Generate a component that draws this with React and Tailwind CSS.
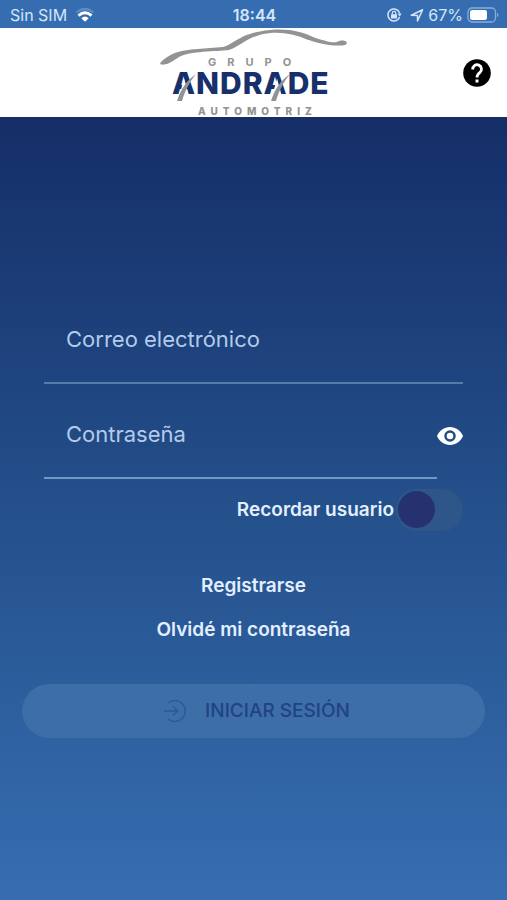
import { useState } from "react";

function StatusBar() {
  return (
    <div className="flex h-7 items-center justify-between bg-[#366db0] px-2 pt-0.5 text-[#d3e5fa]">
      <div className="flex flex-1 items-center gap-2 pl-0.5 text-base leading-5">
        <span>Sin SIM</span>
        <svg className="h-4 w-5" viewBox="0 0 20 16" fill="none" aria-hidden="true">
          <path d="M1.5 5.5Q10 -1.5 18.5 5.5" stroke="#5a8dc8" strokeWidth="2.2" />
          <path d="M3.500 8.6Q10 2.800 16.500 8.6" stroke="#fff" strokeWidth="2.8" />
          <path d="M6.3 11.2Q10 7.800 13.7 11.2L10 14.8Z" fill="#fff" />
        </svg>
      </div>
      <span className="text-base leading-5 font-semibold">18:44</span>
      <div className="flex flex-1 items-center justify-end gap-1 text-base leading-5">
        <svg className="mr-1 h-4 w-4" viewBox="0 0 16 16" fill="none" stroke="currentColor" aria-hidden="true">
          <path d="M13.6 6A6 6 0 1 0 13.6 10" strokeWidth="1.5" />
          <path d="M11.5 6.5h4.2l-2 3z" fill="currentColor" stroke="none" />
          <rect x="5" y="7.2" width="6" height="4.3" rx=".6" fill="currentColor" stroke="none" />
          <path d="M6.3 7.5V6a1.7 1.7 0 0 1 3.4 0v1.5" strokeWidth="1.2" />
        </svg>
        <svg className="h-4 w-3.5" viewBox="0 0 14 16" fill="none" stroke="currentColor" strokeWidth="1.5" strokeLinejoin="round" aria-hidden="true">
          <path d="M1.3 8.2 12.6 2.8 7.5 14V8.4Z" />
        </svg>
        <span>67%</span>
        <svg className="h-4 w-8" viewBox="0 0 32 16" fill="none" aria-hidden="true">
          <rect x="1" y="1" width="27.5" height="14" rx="4" stroke="#86aeda" strokeWidth="1.3" />
          <rect x="3" y="3" width="17" height="10" rx="2.2" fill="#fff" />
          <path d="M30 5.5q2.6 2.5 0 5z" fill="#86aeda" />
        </svg>
      </div>
    </div>
  );
}

function Logo() {
  return (
    <svg className="h-[89px] w-[190px]" viewBox="158 28 190 89" role="img" aria-label="Grupo Andrade Automotriz">
      <path
        d="M160 62C168 54 177 51 190 49.500L222 47C233 44 238 35 259 31.500C282 27 300 31 312 37C323 41 331 43 336 42C339 40 344 40 345.500 42C347 45 342 46 336 45.500C326 45.500 317 43 306 39.500C291 33 276 31 260 34.500C244 39 238 47 228 50C215 51.500 189 51 178 57C172 61 168 64 163 64.500C160 65 158 64 160 62Z"
        fill="#929395"
      />
      <text x="207" y="66" fontSize="11" className="fill-[#929395] font-['Inter'] font-bold tracking-[11px]">GRUPO</text>
      <text x="171" y="94" fontSize="30" className="fill-[#17306b] font-['Inter'] font-extrabold tracking-[1px]">ANDRADE</text>
      <path d="M183 78.500L187.500 95H178.500Z" fill="#fff" />
      <path d="M276 78.500L280.500 95H271.500Z" fill="#fff" />
      <path d="M176 101C180 89 185 81 195 74C188 83 184 91 181 101Z" fill="#929395" />
      <path d="M270 101C274 89 279 81 289 74C282 83 278 91 275 101Z" fill="#929395" />
      <text x="197" y="115" fontSize="10" className="fill-[#929395] font-['Inter'] font-extrabold tracking-[5px]">AUTOMOTRIZ</text>
    </svg>
  );
}

function EyeIcon() {
  return (
    <svg className="h-5 w-[26px]" viewBox="0 0 26 20" aria-hidden="true">
      <path d="M0 10C2.500 4.500 7 1 13 1s10.500 3.500 13 9c-2.500 5.500-7 9-13 9S2.500 15.500 0 10Z" fill="#fff" />
      <circle cx="13" cy="10" r="4.500" fill="none" stroke="#234c87" strokeWidth="2.500" />
    </svg>
  );
}

export default function App() {
  const [visible, setVisible] = useState(false);
  const [remember, setRemember] = useState(false);
  return (
    <div className="flex min-h-screen flex-col font-['Inter','Liberation_Sans',sans-serif]">
      <StatusBar />
      <header className="grid grid-cols-[1fr_auto_1fr] items-center bg-white">
        <span />
        <Logo />
        <button type="button" aria-label="Ayuda" className="mr-4 justify-self-end">
          <svg className="h-7 w-7" viewBox="0 0 28 28" fill="none" aria-hidden="true">
            <circle cx="14" cy="14" r="13.800" fill="#000" />
            <path d="M9.700 10.500A4.400 4.400 0 1 1 16.800 13.600C15 15 14 15.800 14 18.500" stroke="#fff" strokeWidth="2.800" />
            <rect x="12.500" y="20.500" width="3" height="3" fill="#fff" />
          </svg>
        </button>
      </header>
      <main className="flex-1 bg-linear-to-b from-[#152e68] via-[#24508b] to-[#366eb1] px-[22px] pt-[172px]">
        <form onSubmit={(e) => e.preventDefault()}>
          <div className="px-[22px]">
            <input
              type="email"
              aria-label="Correo electrónico"
              placeholder="Correo electrónico"
              className="block h-[95px] w-full border-b-2 border-[#597aa8] px-[22px] pt-1.5 text-[22px] text-white outline-none placeholder:text-[#b3cbea]"
            />
            <div className="flex items-center">
              <input
                type={visible ? "text" : "password"}
                aria-label="Contraseña"
                placeholder="Contraseña"
                className="block h-[95px] min-w-0 flex-1 border-b-2 border-[#7097c6] px-[22px] pt-1.5 text-[22px] text-white outline-none placeholder:text-[#b3cbea]"
              />
              <button type="button" aria-label="Mostrar contraseña" onClick={() => setVisible(!visible)} className="pt-2">
                <EyeIcon />
              </button>
            </div>
            <label className="mt-2.5 flex items-center justify-end gap-0.5 text-[19px] leading-7 font-semibold text-[#e3efff]">
              Recordar usuario
              <input
                type="checkbox"
                role="switch"
                checked={remember}
                onChange={(e) => setRemember(e.target.checked)}
                className="h-[42px] w-[67px] appearance-none rounded-full bg-[#2e5688] p-0.5 before:block before:size-[37px] before:rounded-full before:bg-[#25326f] checked:before:ml-auto"
              />
            </label>
          </div>
          <nav className="mt-[41px] flex flex-col items-center gap-4 text-[19px] leading-7 font-semibold text-[#e3efff]">
            <a href="#registro">Registrarse</a>
            <a href="#recuperar">Olvidé mi contraseña</a>
          </nav>
          <button
            type="submit"
            className="mt-10 flex h-[54px] w-full items-center justify-center gap-[18px] rounded-full bg-[#3e6ea8] pl-1.5 text-[19px] leading-7 font-medium text-[#204383]"
          >
            <svg className="size-6" viewBox="0 0 24 24" fill="none" stroke="#2c5a98" strokeWidth="1.500" aria-hidden="true">
              <path d="M5 4A10.500 10.500 0 1 1 5 20M1 12H14M10 7.500 14.500 12 10 16.500" />
            </svg>
            INICIAR SESIÓN
          </button>
        </form>
      </main>
    </div>
  );
}
